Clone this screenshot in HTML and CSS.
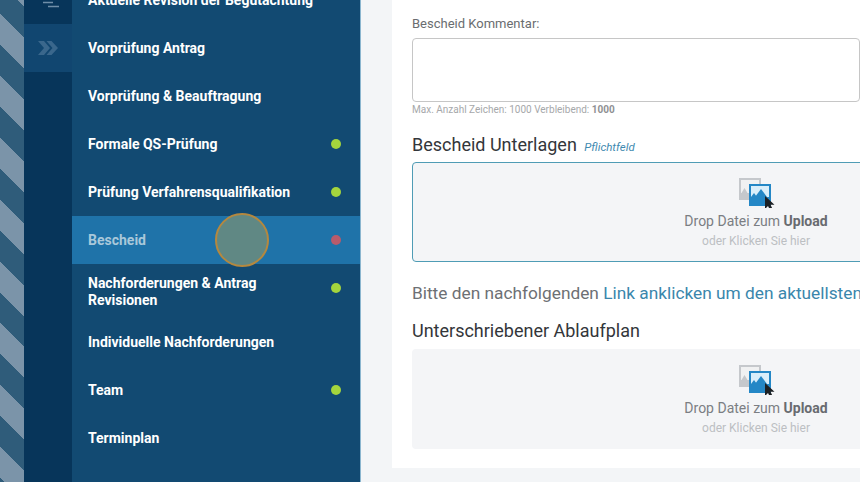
FILE: index.html
```html
<!DOCTYPE html>
<html lang="de">
<head>
<meta charset="utf-8">
<title>Bescheid</title>
<link rel="stylesheet" href="styles.css">
</head>
<body>
<div class="app">
  <div class="stripes"></div>
  <nav class="rail">
    <div class="rail-top">
      <svg class="rail-lines" width="24" height="10" viewBox="0 0 24 10"><path d="M7 2.500h10M12 6.500h11" stroke="#6f8ea8" stroke-width="1.300" fill="none"/></svg>
    </div>
    <div class="rail-active">
      <svg width="20" height="14" viewBox="0 0 20 14"><path d="M0 0h6l6 7-6 7H0l6-7zM8.500 0h5l6.500 7-6.500 7h-5l6-7z" fill="#3a678c"/></svg>
    </div>
  </nav>
  <ul class="menu">
    <li class="item">Aktuelle Revision der Begutachtung</li>
    <li class="item">Vorprüfung Antrag</li>
    <li class="item">Vorprüfung &amp; Beauftragung</li>
    <li class="item">Formale QS-Prüfung<span class="dot green"></span></li>
    <li class="item">Prüfung Verfahrensqualifikation<span class="dot green"></span></li>
    <li class="item active">Bescheid<span class="dot red"></span></li>
    <li class="item tall"><span class="label">Nachforderungen &amp; Antrag Revisionen</span><span class="dot green up"></span></li>
    <li class="item">Individuelle Nachforderungen</li>
    <li class="item">Team<span class="dot green"></span></li>
    <li class="item">Terminplan</li>
    <li class="item last">Dateien</li>
  </ul>
  <main class="main">
    <section class="card">
      <label class="field-label">Bescheid Kommentar:</label>
      <div class="textarea"></div>
      <p class="hint">Max. Anzahl Zeichen: 1000 Verbleibend: <b>1000</b></p>
      <h2 class="heading first">Bescheid Unterlagen <em class="required">Pflichtfeld</em></h2>
      <div class="drop focus">
        <svg class="drop-icon" width="38" height="30" viewBox="0 0 38 30">
          <rect x="1" y="1" width="20" height="20" fill="#f0f1f2" stroke="#c5c8cc" stroke-width="2"/>
          <rect x="2" y="15" width="18" height="5" fill="#c5c8cc"/>
          <path d="M2.500 15l3-5 3 5z" fill="#c5c8cc"/>
          <rect x="11" y="7" width="20" height="20" fill="#d9eefa" stroke="#2487c6" stroke-width="2"/>
          <rect x="11" y="19" width="20" height="8" fill="#2487c6"/>
          <path d="M12 19l3-4 3 4zM16 19l6-8 6 8z" fill="#2487c6"/>
          <path d="M26 18v13l3-3 2.500 5 2.500-1.200-2.500-5h4z" fill="#1c2024"/>
        </svg>
        <p class="drop-title">Drop Datei zum <b>Upload</b></p>
        <p class="drop-sub">oder Klicken Sie hier</p>
      </div>
      <p class="notice">Bitte den nachfolgenden <a class="link">Link anklicken um den aktuellsten Ablaufplan herunterzuladen</a></p>
      <h2 class="heading">Unterschriebener Ablaufplan</h2>
      <div class="drop">
        <svg class="drop-icon" width="38" height="30" viewBox="0 0 38 30">
          <rect x="1" y="1" width="20" height="20" fill="#f0f1f2" stroke="#c5c8cc" stroke-width="2"/>
          <rect x="2" y="15" width="18" height="5" fill="#c5c8cc"/>
          <path d="M2.500 15l3-5 3 5z" fill="#c5c8cc"/>
          <rect x="11" y="7" width="20" height="20" fill="#d9eefa" stroke="#2487c6" stroke-width="2"/>
          <rect x="11" y="19" width="20" height="8" fill="#2487c6"/>
          <path d="M12 19l3-4 3 4zM16 19l6-8 6 8z" fill="#2487c6"/>
          <path d="M26 18v13l3-3 2.500 5 2.500-1.200-2.500-5h4z" fill="#1c2024"/>
        </svg>
        <p class="drop-title">Drop Datei zum <b>Upload</b></p>
        <p class="drop-sub">oder Klicken Sie hier</p>
      </div>
    </section>
  </main>
  <div class="click-marker"></div>
</div>
</body>
</html>
```

FILE: styles.css
```css
* { box-sizing: border-box; }
html, body { margin: 0; padding: 0; height: 100%; overflow: hidden; }
body { font-family: Roboto, "Liberation Sans", sans-serif; background: #f3f5f7; }
.app { position: relative; display: flex; width: 860px; height: 482px; overflow: hidden; }
.stripes {
  flex: 0 0 24px;
  background: repeating-linear-gradient(45deg, #2f5c7a 0, #2f5c7a 2.83px, #7b94a9 2.83px, #7b94a9 24.75px, #2f5c7a 24.75px, #2f5c7a 43.84px);
}
.rail { flex: 0 0 48px; background: #07355a; display: flex; flex-direction: column; }
.rail-top { height: 24px; }
.rail-lines { display: block; margin-left: 12px; }
.rail-active { height: 48px; background: #114670; display: flex; align-items: center; justify-content: center; }
.menu { flex: 0 0 288px; margin: -24px 0 0; padding: 0; list-style: none; background: #124a72; }
.item {
  position: relative; display: flex; align-items: center; height: 48px; padding: 0 19px 0 16px;
  color: #fff; font-size: 14px; font-weight: 700; line-height: 17px;
}
.item.tall { height: 54px; }
.item.active { background: #1f73a9; color: #a9c8da; }
.item.last { padding-top: 4px; }
.label { width: 190px; padding-top: 2px; }
.dot { width: 10px; height: 10px; border-radius: 50%; margin-left: auto; }
.dot.green { background: #a4d53d; }
.dot.red { background: #b85b6b; }
.dot.up { margin-top: -6px; }
.main { flex: 1; min-width: 0; padding-left: 31px; border-left: 1px solid #8bb6cf; background: #f3f5f7; }
.card { width: 722px; height: 468px; padding: 16px 14px 20px 20px; background: #fff; }
.field-label { display: block; color: #6a6d70; font-size: 13px; line-height: 15px; }
.textarea { width: 448px; height: 64px; margin-top: 7px; background: #fff; border: 1px solid #c6c6c6; border-radius: 4px; }
.hint { margin: 2px 0 0; color: #a6a8aa; font-size: 10px; line-height: 12px; }
.hint b { color: #8f9193; }
.heading { margin: 0; color: #33363a; font-size: 18px; font-weight: 400; line-height: 22px; }
.heading.first { margin-top: 18px; margin-bottom: 4px; }
.required { margin-left: 3px; color: #3f8ab0; font-size: 11.500px; }
.drop { display: flex; flex-direction: column; align-items: center; height: 100px; padding-top: 16px; background: #f4f5f7; border-radius: 4px; }
.drop.focus { border: 1px solid #4f9cb5; padding-top: 15px; }
.drop-icon { display: block; margin-left: 4px; }
.drop-title { margin: 4px 0 0; color: #7b7e83; font-size: 14px; line-height: 18px; }
.drop-title b { color: #686b70; }
.drop-sub { margin: 4px 0 0; color: #bcbfc3; font-size: 12px; line-height: 14px; }
.notice { margin: 19px 0 0; color: #6d7074; font-size: 17.300px; line-height: 24px; white-space: nowrap; }
.link { color: #3a86ac; }
.notice + .heading { margin-top: 15px; margin-bottom: 7px; }
.click-marker { position: absolute; left: 215px; top: 213px; width: 54px; height: 54px; border-radius: 50%; background: #608884; border: 2px solid #b4883f; }
```
